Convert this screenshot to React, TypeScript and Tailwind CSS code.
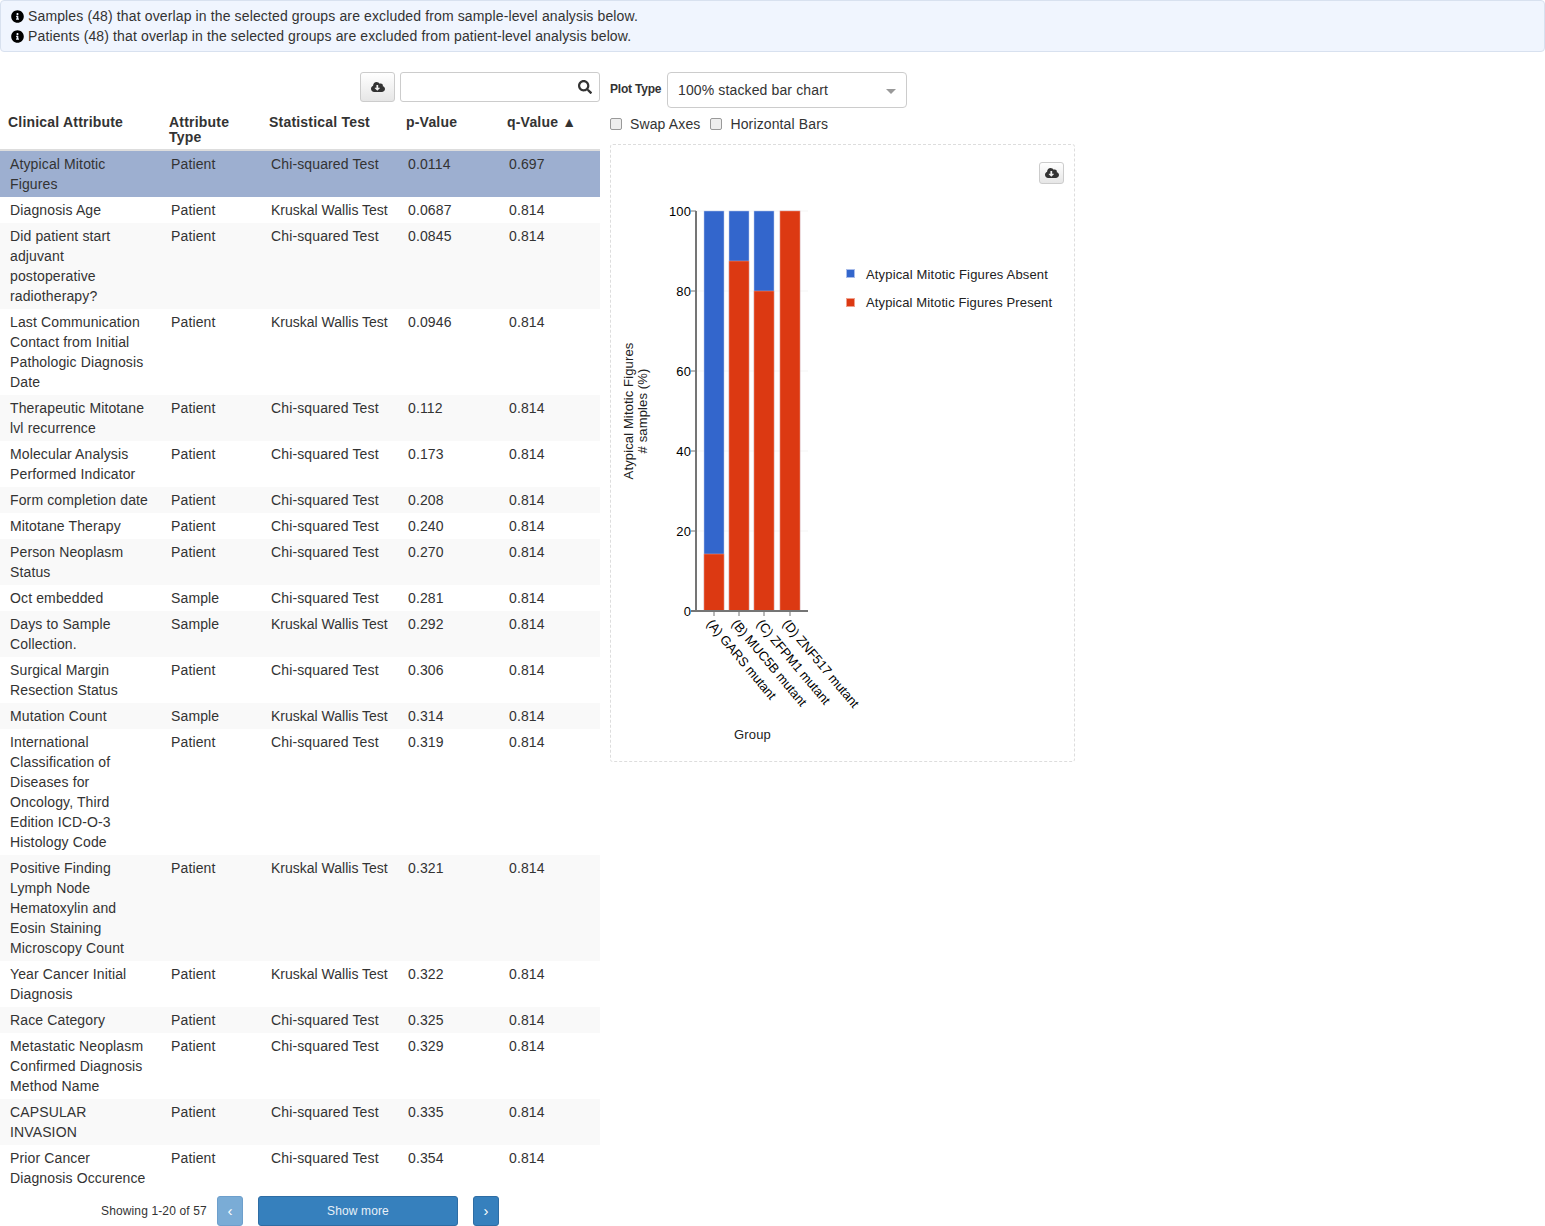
import React from 'react';
import { FaCloudDownloadAlt, FaInfoCircle, FaSearch } from 'react-icons/fa';

interface Row {
  name: string;
  type: string;
  test: string;
  p: string;
  q: string;
}

const CHI = 'Chi-squared Test';
const KW = 'Kruskal Wallis Test';

const rows: Row[] = [
  { name: 'Atypical Mitotic Figures', type: 'Patient', test: CHI, p: '0.0114', q: '0.697' },
  { name: 'Diagnosis Age', type: 'Patient', test: KW, p: '0.0687', q: '0.814' },
  { name: 'Did patient start adjuvant postoperative radiotherapy?', type: 'Patient', test: CHI, p: '0.0845', q: '0.814' },
  { name: 'Last Communication Contact from Initial Pathologic Diagnosis Date', type: 'Patient', test: KW, p: '0.0946', q: '0.814' },
  { name: 'Therapeutic Mitotane lvl recurrence', type: 'Patient', test: CHI, p: '0.112', q: '0.814' },
  { name: 'Molecular Analysis Performed Indicator', type: 'Patient', test: CHI, p: '0.173', q: '0.814' },
  { name: 'Form completion date', type: 'Patient', test: CHI, p: '0.208', q: '0.814' },
  { name: 'Mitotane Therapy', type: 'Patient', test: CHI, p: '0.240', q: '0.814' },
  { name: 'Person Neoplasm Status', type: 'Patient', test: CHI, p: '0.270', q: '0.814' },
  { name: 'Oct embedded', type: 'Sample', test: CHI, p: '0.281', q: '0.814' },
  { name: 'Days to Sample Collection.', type: 'Sample', test: KW, p: '0.292', q: '0.814' },
  { name: 'Surgical Margin Resection Status', type: 'Patient', test: CHI, p: '0.306', q: '0.814' },
  { name: 'Mutation Count', type: 'Sample', test: KW, p: '0.314', q: '0.814' },
  { name: 'International Classification of Diseases for Oncology, Third Edition ICD-O-3 Histology Code', type: 'Patient', test: CHI, p: '0.319', q: '0.814' },
  { name: 'Positive Finding Lymph Node Hematoxylin and Eosin Staining Microscopy Count', type: 'Patient', test: KW, p: '0.321', q: '0.814' },
  { name: 'Year Cancer Initial Diagnosis', type: 'Patient', test: KW, p: '0.322', q: '0.814' },
  { name: 'Race Category', type: 'Patient', test: CHI, p: '0.325', q: '0.814' },
  { name: 'Metastatic Neoplasm Confirmed Diagnosis Method Name', type: 'Patient', test: CHI, p: '0.329', q: '0.814' },
  { name: 'CAPSULAR INVASION', type: 'Patient', test: CHI, p: '0.335', q: '0.814' },
  { name: 'Prior Cancer Diagnosis Occurence', type: 'Patient', test: CHI, p: '0.354', q: '0.814' },
];

const BLUE = '#3366cc';
const RED = '#dc3912';

// top of the red part of each bar, in chart pixels
const bars = [
  { x: 93, redTop: 409 },
  { x: 118, redTop: 116 },
  { x: 143, redTop: 146 },
  { x: 169, redTop: 66 },
];

const xLabels = ['(A) GARS mutant', '(B) MUC5B mutant', '(C) ZFPM1 mutant', '(D) ZNF517 mutant'];

const Chart = () => (
  <svg width="463" height="616" className="block" fontFamily="'Liberation Sans', Arial, sans-serif">
    {/* grid and ticks */}
    {[0, 20, 40, 60, 80, 100].map((v) => {
      const y = 466 - v * 4;
      return (
        <g key={v}>
          {v > 0 && <line x1={85} x2={197} y1={y} y2={y} stroke="#f5f5f5" strokeWidth={1} />}
          <line x1={80} x2={85} y1={y} y2={y} stroke="#757575" />
          <text x={80} y={y + 4.5} textAnchor="end" fontSize={13} fill="#000">
            {v}
          </text>
        </g>
      );
    })}

    {bars.map((b) => (
      <g key={b.x}>
        <rect x={b.x} y={66} width={20} height={400} fill={BLUE} stroke="#b9c8ea" strokeWidth={0.5} />
        <rect x={b.x} y={b.redTop} width={20} height={466 - b.redTop} fill={RED} stroke="#f0a08c" strokeWidth={0.5} />
      </g>
    ))}

    <line x1={85} x2={85} y1={66} y2={466} stroke="#757575" strokeWidth={2} />
    <line x1={80} x2={197} y1={466} y2={466} stroke="#757575" strokeWidth={2} />

    {bars.map((b, i) => (
      <g key={i}>
        <line x1={b.x + 10} x2={b.x + 10} y1={466} y2={471} stroke="#757575" />
        <text
          x={b.x + 2}
          y={479}
          fontSize={13}
          letterSpacing={-0.08}
          fill="#000"
          transform={`rotate(50 ${b.x + 2} 479)`}
        >
          {xLabels[i]}
        </text>
      </g>
    ))}

    <text transform="rotate(-90 22 266)" x={22} y={266} textAnchor="middle" fontSize={13} letterSpacing={0.13} fill="#222">
      Atypical Mitotic Figures
    </text>
    <text transform="rotate(-90 36 266)" x={36} y={266} textAnchor="middle" fontSize={13} letterSpacing={0.13} fill="#222">
      # samples (%)
    </text>
    <text x={141.5} y={594} textAnchor="middle" fontSize={13} fill="#222">
      Group
    </text>

    {/* legend */}
    <rect x={235.5} y={124.5} width={8} height={8} fill={BLUE} stroke="#a9bdea" strokeWidth={1} />
    <text x={255} y={134} fontSize={13} letterSpacing={0.16} fill="#222">
      Atypical Mitotic Figures Absent
    </text>
    <rect x={235.5} y={153.5} width={8} height={8} fill={RED} stroke="#f0a08c" strokeWidth={1} />
    <text x={255} y={162} fontSize={13} letterSpacing={0.13} fill="#222">
      Atypical Mitotic Figures Present
    </text>
  </svg>
);

const App = () => {
  return (
    <div className="font-['Liberation_Sans',Arial,sans-serif] text-sm tracking-[0.13px] text-[#333] bg-white w-[1545px] h-[1226px] overflow-hidden">
      <div className="h-[52px] bg-[#f0f5fe] border border-[#d8e1ef] rounded px-[10px] pt-[5px] leading-[20px]">
        <div className="flex items-center gap-[5px]">
          <FaInfoCircle className="text-black text-[13px] shrink-0 -mr-px" />
          <span>Samples (48) that overlap in the selected groups are excluded from sample-level analysis below.</span>
        </div>
        <div className="flex items-center gap-[5px]">
          <FaInfoCircle className="text-black text-[13px] shrink-0 -mr-px" />
          <span>Patients (48) that overlap in the selected groups are excluded from patient-level analysis below.</span>
        </div>
      </div>

      <div className="flex gap-[10px] pt-[20px]">
        {/* table side */}
        <div className="w-[600px]">
          <div className="flex justify-end gap-[5px]">
            <button className="w-[35px] h-[30px] flex items-center justify-center rounded-[3px] border border-[#ccc] bg-gradient-to-b from-white to-[#e6e6e6]">
              <FaCloudDownloadAlt className="text-[#333] text-[14px] -mt-px" />
            </button>
            <div className="relative w-[200px] h-[30px] rounded-[3px] border border-[#ccc] bg-white">
              <FaSearch className="absolute right-[7px] top-[7px] text-[#333] text-[14px]" />
            </div>
          </div>

          <table className="w-[600px] table-fixed border-collapse mt-[10px]">
            <colgroup>
              <col className="w-[161px]" />
              <col className="w-[100px]" />
              <col className="w-[137px]" />
              <col className="w-[101px]" />
              <col className="w-[101px]" />
            </colgroup>
            <thead>
              <tr className="border-b-2 border-[#ddd] align-top text-left font-bold leading-[15px] tracking-[0.2px]">
                <th className="pl-2 pt-[3px] pb-1">Clinical Attribute</th>
                <th className="pl-2 pt-[3px] pb-1">
                  Attribute
                  <br />
                  Type
                </th>
                <th className="pl-2 pt-[3px] pb-1">Statistical Test</th>
                <th className="pl-2 pt-[3px] pb-1">p-Value</th>
                <th className="pl-2 pt-[3px] pb-1">q-Value ▲</th>
              </tr>
            </thead>
            <tbody>
              {rows.map((r, i) => (
                <tr
                  key={r.name}
                  className={`align-top leading-[20px] ${i === 0 ? 'bg-[#9dafd0]' : i % 2 === 0 ? 'bg-[#f9f9f9]' : 'bg-white'}`}
                >
                  <td className="px-[10px] py-[3px]">{r.name}</td>
                  <td className="px-[10px] py-[3px]">{r.type}</td>
                  <td className={`px-[10px] py-[3px] whitespace-nowrap ${r.test === KW ? 'tracking-normal' : ''}`}>{r.test}</td>
                  <td className="px-[10px] py-[3px]">{r.p}</td>
                  <td className="px-[10px] py-[3px]">{r.q}</td>
                </tr>
              ))}
            </tbody>
          </table>

          <div className="flex items-center h-[30px] mt-[5px] pl-[101px] text-xs">
            <span className="w-[116px]">Showing 1-20 of 57</span>
            <button className="w-[26px] h-[30px] rounded-[3px] bg-[#7aacd6] border border-[#6d9fcc] text-white text-[15px]">‹</button>
            <button className="w-[200px] h-[30px] ml-[15px] rounded-[3px] bg-[#3680bd] border border-[#2e6da4] text-[#e8f0f8]">
              Show more
            </button>
            <button className="w-[26px] h-[30px] ml-[15px] rounded-[3px] bg-[#3680bd] border border-[#2e6da4] text-white text-[15px]">›</button>
          </div>
        </div>

        {/* plot side */}
        <div className="w-[465px]">
          <div className="flex items-center gap-[5px]">
            <span className="w-[52px] pb-[2px] text-xs font-bold tracking-[-0.2px]">Plot Type</span>
            <div className="relative w-[240px] h-[36px] rounded border border-[#ccc] bg-white pl-[10px] leading-[35px] text-[#333]">
              100% stacked bar chart
              <span className="absolute right-[10px] top-[16px] border-x-[5px] border-t-[5px] border-x-transparent border-t-[#999]" />
            </div>
          </div>

          <div className="flex items-center h-[20px] mt-[6px]">
            <input type="checkbox" readOnly className="appearance-none w-3 h-3 rounded-[2px] border border-[#999] bg-[#eee]" />
            <span className="ml-2">Swap Axes</span>
            <input type="checkbox" readOnly className="appearance-none w-3 h-3 ml-[10px] rounded-[2px] border border-[#999] bg-[#eee]" />
            <span className="ml-2">Horizontal Bars</span>
          </div>

          <div className="relative w-[465px] h-[618px] mt-[10px] border border-dashed border-[#ddd] rounded-[3px]">
            <button className="absolute right-[10px] top-[17px] w-[25px] h-[22px] flex items-center justify-center rounded-[3px] border border-[#ccc] bg-gradient-to-b from-white to-[#e6e6e6]">
              <FaCloudDownloadAlt className="text-[#333] text-[14px] -mt-px" />
            </button>
            <Chart />
          </div>
        </div>
      </div>
    </div>
  );
};

export default App;
